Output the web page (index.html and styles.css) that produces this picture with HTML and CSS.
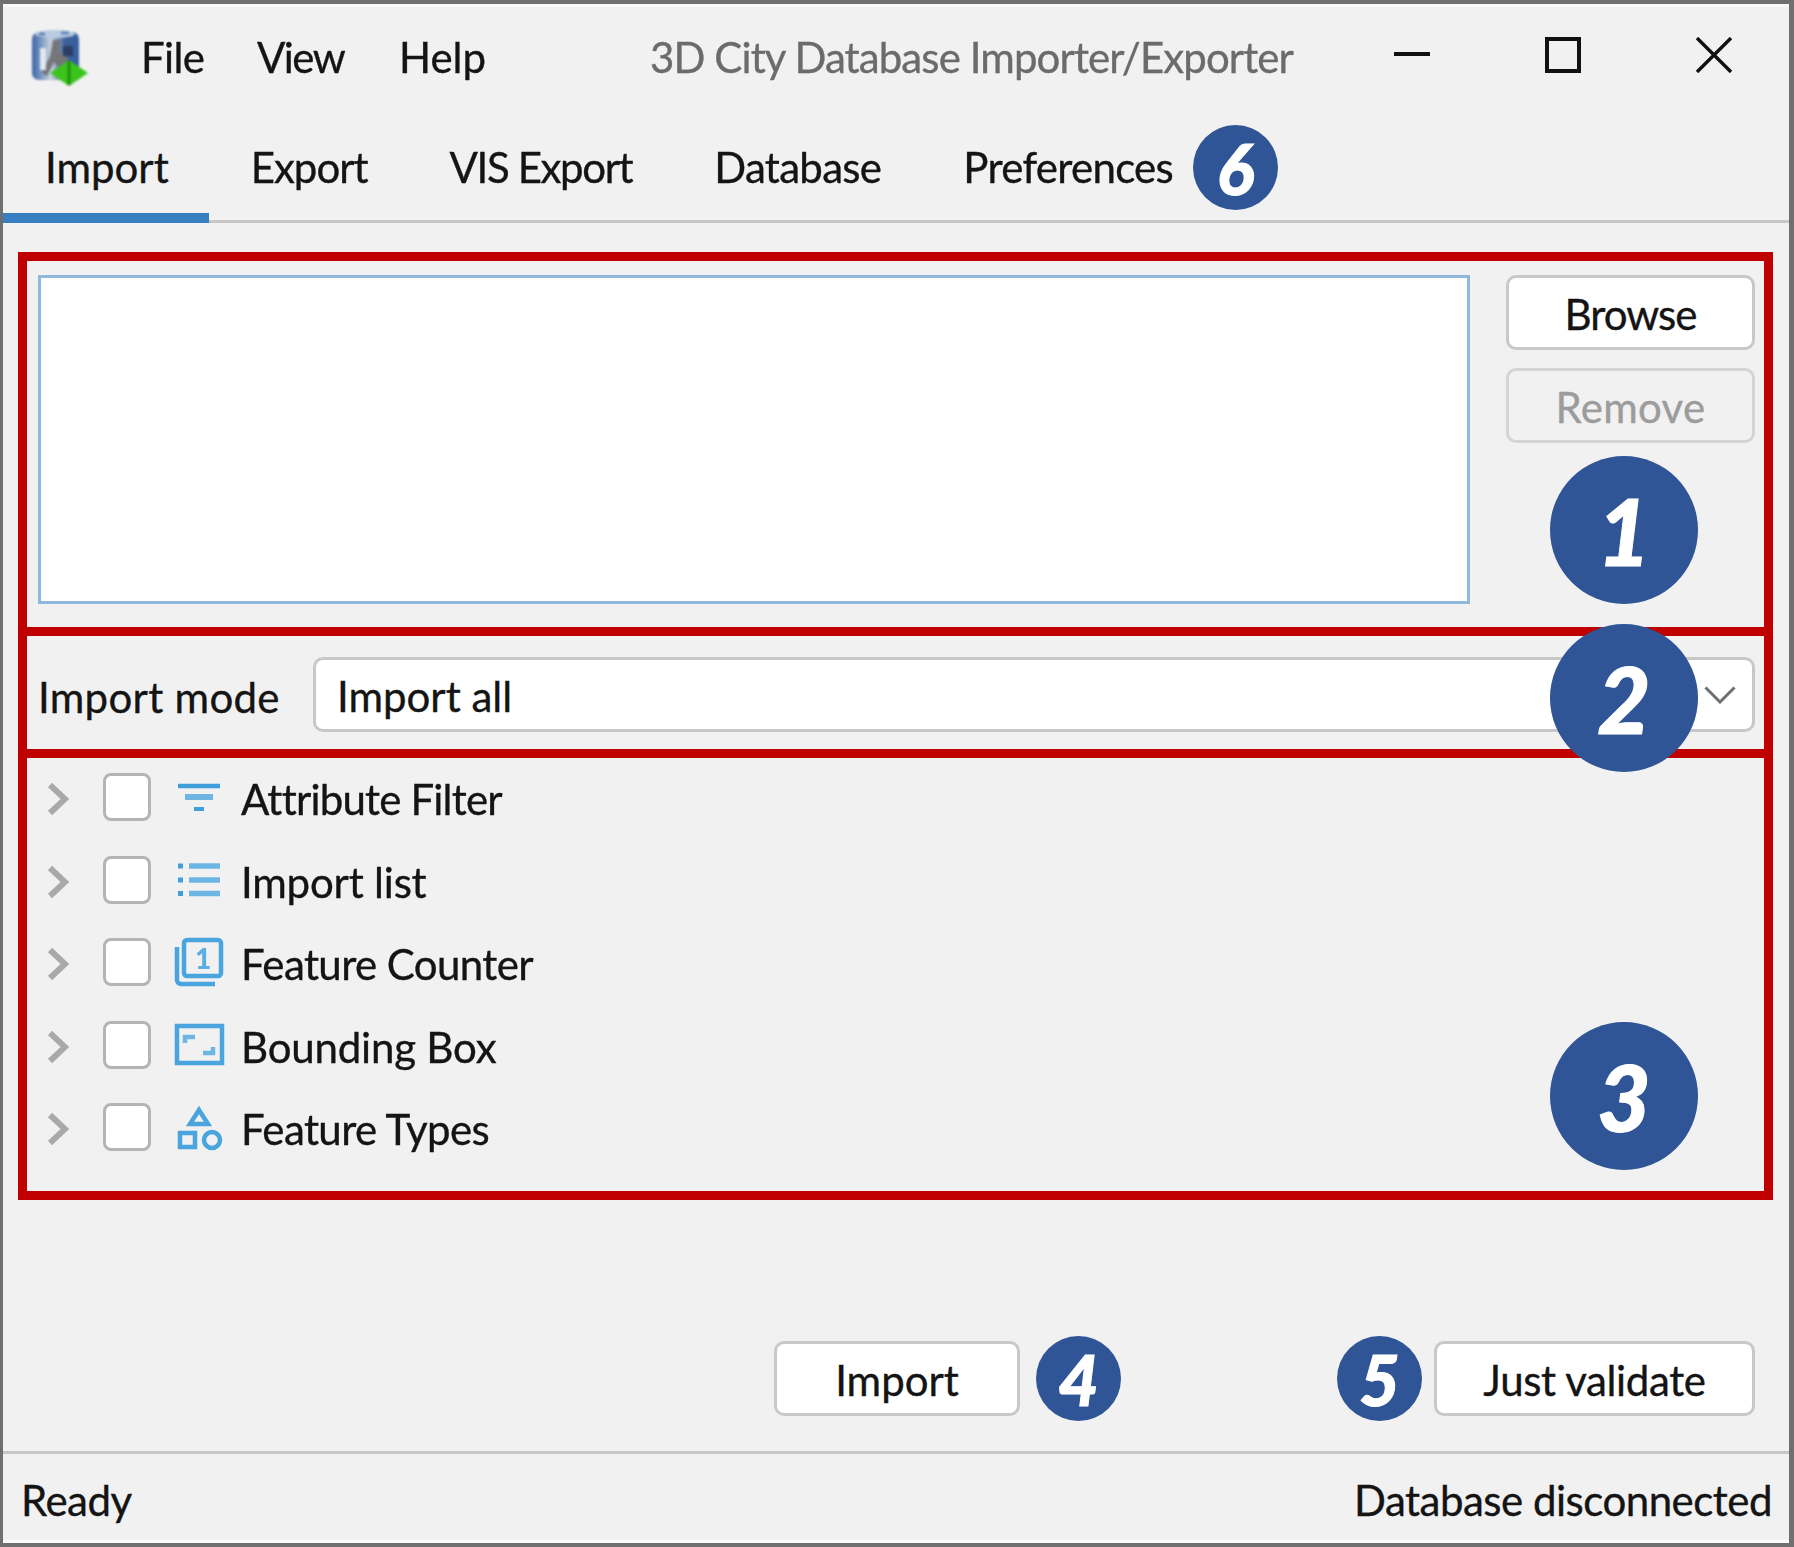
FILE: index.html
```html
<!DOCTYPE html>
<html lang="en">
<head>
<meta charset="utf-8">
<title>3D City Database Importer/Exporter</title>
<link rel="stylesheet" href="styles.css">
</head>
<body>
<div class="window">
  <header class="titlebar">
    <svg class="logo" viewBox="0 0 60 60" aria-hidden="true">
      <defs>
        <linearGradient id="cyl" x1="0" x2="1" y1="0" y2="0">
          <stop offset="0" stop-color="#3f66a6"/>
          <stop offset=".12" stop-color="#5f83b8"/>
          <stop offset=".4" stop-color="#c9d3de"/>
          <stop offset=".7" stop-color="#3d5f96"/>
          <stop offset="1" stop-color="#3560a4"/>
        </linearGradient>
      </defs>
      <rect x="3" y="4" width="47" height="48" rx="7" fill="url(#cyl)"/>
      <ellipse cx="26" cy="6" rx="20" ry="4" fill="#b9cbe0"/>
      <path d="M10 6h6M32 5h8" stroke="#5f83b8" stroke-width="3"/>
      <path d="M24 12h7v12l8 6-7 14-7-10-7 14-5-3 8-17z" fill="#75767a"/>
      <path d="M11 20h6v22h-6z" fill="#e2e8ee"/>
      <path d="M34 18h10v10h-10z" fill="#2c3e64"/>
      <polygon points="40,32 59,45 40,58 21,45" fill="#3cc41c"/>
      <path d="M40 33V57" stroke="#1e9010" stroke-width="3"/>
    </svg>
    <nav class="menu">
      <span class="menu-item menu-file">File</span>
      <span class="menu-item menu-view">View</span>
      <span class="menu-item menu-help">Help</span>
    </nav>
    <span class="app-title">3D City Database Importer/Exporter</span>
    <div class="controls">
      <span class="control"><svg class="control-icon" viewBox="0 0 36 36"><path d="M0 17H36" stroke="#111" stroke-width="4"/></svg></span>
      <span class="control"><svg class="control-icon" viewBox="0 0 36 36"><rect x="2" y="2" width="32" height="32" fill="none" stroke="#111" stroke-width="4"/></svg></span>
      <span class="control"><svg class="control-icon" viewBox="0 0 36 36"><path d="M1 1L35 35M35 1L1 35" stroke="#111" stroke-width="3.400"/></svg></span>
    </div>
  </header>

  <nav class="tabs">
    <span class="tab tab-active">Import</span>
    <span class="tab tab-export">Export</span>
    <span class="tab tab-vis">VIS Export</span>
    <span class="tab tab-db">Database</span>
    <span class="tab tab-prefs">Preferences</span>
  </nav>

  <main class="content">
    <section class="frame frame-files">
      <div class="file-list"></div>
      <div class="file-actions">
        <button class="btn btn-browse">Browse</button>
        <button class="btn btn-disabled">Remove</button>
      </div>
    </section>

    <section class="frame frame-mode">
      <label class="mode-label">Import mode</label>
      <div class="combo">
        <span class="combo-value">Import all</span>
        <svg class="combo-arrow" viewBox="0 0 32 18"><path d="M1.500 1.500L16 16L30.500 1.500" fill="none" stroke="#707070" stroke-width="3"/></svg>
      </div>
    </section>

    <section class="frame frame-tree">
      <div class="row">
        <svg class="chevron" viewBox="0 0 22 34"><path d="M3 3L18 17L3 31" fill="none" stroke="#a9a9a9" stroke-width="6"/></svg>
        <span class="check"></span>
        <svg class="icon" viewBox="0 0 48 48"><path d="M2 13H44" stroke="#3f9fdc" stroke-width="4.500"/><path d="M9 24H37" stroke="#6db6e4" stroke-width="6"/><path d="M18 36H28" stroke="#3f9fdc" stroke-width="4"/></svg>
        <span class="row-label label-attr">Attribute Filter</span>
      </div>
      <div class="row">
        <svg class="chevron" viewBox="0 0 22 34"><path d="M3 3L18 17L3 31" fill="none" stroke="#a9a9a9" stroke-width="6"/></svg>
        <span class="check"></span>
        <svg class="icon" viewBox="0 0 48 48"><path d="M2 10H7M2 24H7M2 37.500H7" stroke="#3f9fdc" stroke-width="5"/><path d="M13 10H44M13 24H44M13 37.500H44" stroke="#6db6e4" stroke-width="5.500"/></svg>
        <span class="row-label label-list">Import list</span>
      </div>
      <div class="row">
        <svg class="chevron" viewBox="0 0 22 34"><path d="M3 3L18 17L3 31" fill="none" stroke="#a9a9a9" stroke-width="6"/></svg>
        <span class="check"></span>
        <svg class="icon" viewBox="0 0 48 48"><rect x="8" y="2" width="37" height="36" rx="3" fill="none" stroke="#4aa5de" stroke-width="4.500"/><path d="M1 9V42a4 4 0 0 0 4 4H39" fill="none" stroke="#4aa5de" stroke-width="4.500"/><text class="icon-digit" x="27" y="31" text-anchor="middle">1</text></svg>
        <span class="row-label label-feat">Feature Counter</span>
      </div>
      <div class="row">
        <svg class="chevron" viewBox="0 0 22 34"><path d="M3 3L18 17L3 31" fill="none" stroke="#a9a9a9" stroke-width="6"/></svg>
        <span class="check"></span>
        <svg class="icon" viewBox="0 0 48 48"><rect x="1" y="5" width="45" height="37" fill="none" stroke="#4aa5de" stroke-width="4.500"/><path d="M9 22V16H19M27 32H37V26" fill="none" stroke="#6db6e4" stroke-width="4.500"/></svg>
        <span class="row-label label-list">Bounding Box</span>
      </div>
      <div class="row">
        <svg class="chevron" viewBox="0 0 22 34"><path d="M3 3L18 17L3 31" fill="none" stroke="#a9a9a9" stroke-width="6"/></svg>
        <span class="check"></span>
        <svg class="icon" viewBox="0 0 48 48"><path d="M23 7L32 21H14Z" fill="none" stroke="#4aa5de" stroke-width="4.500"/><rect x="4" y="30" width="15" height="14" fill="none" stroke="#4aa5de" stroke-width="4.500"/><circle cx="36" cy="37" r="8" fill="none" stroke="#4aa5de" stroke-width="4.500"/></svg>
        <span class="row-label label-feat">Feature Types</span>
      </div>
    </section>

    <div class="actions">
      <button class="btn btn-import">Import</button>
      <button class="btn btn-validate">Just validate</button>
    </div>
  </main>

  <footer class="statusbar">
    <span class="status-text">Ready</span>
    <span class="status-text">Database disconnected</span>
  </footer>

  <span class="badge badge-large badge-1">1</span>
  <span class="badge badge-large badge-2">2</span>
  <span class="badge badge-large badge-3">3</span>
  <span class="badge badge-small badge-4">4</span>
  <span class="badge badge-small badge-5">5</span>
  <span class="badge badge-small badge-6">6</span>
</div>
</body>
</html>
```
FILE: styles.css
```css
* { box-sizing: border-box; }

html, body { margin: 0; padding: 0; }

body {
  width: 1794px;
  height: 1547px;
  background: #f1f1f1;
  font-family: "Lato", "Liberation Sans", sans-serif;
  font-size: 42px;
  color: #141414;
  -webkit-text-stroke: .35px currentColor;
}

.window {
  position: relative;
  width: 1794px;
  height: 1547px;
  display: flex;
  flex-direction: column;
  background: #f1f1f1;
  border-style: solid;
  border-color: #6f6f6f;
  border-width: 4px 5px 4px 3px;
  box-shadow: inset 0 3px 0 #f8f8f8, inset 0 -3px 0 #fbfbfb;
}

/* Title bar */
.titlebar {
  height: 101px;
  display: flex;
  align-items: center;
  flex: none;
}

.logo {
  width: 60px;
  height: 60px;
  margin: 6px 0 0 26px;
  flex: none;
  filter: blur(1px);
}

.menu {
  display: flex;
  margin-left: 52px;
  padding-top: 5px;
  filter: blur(.5px);
}

.menu-file { width: 116px; letter-spacing: -.6px; }
.menu-view { width: 142px; letter-spacing: -1.600px; }
.menu-help { width: 251px; }

.app-title {
  color: #6b6b6b;
  white-space: nowrap;
  padding-top: 5px;
  letter-spacing: -.9px;
  filter: blur(.5px);
}

.controls {
  display: flex;
  margin-left: auto;
}

.control {
  width: 151px;
  display: flex;
  justify-content: center;
}

.control-icon { width: 36px; height: 36px; }

/* Tabs */
.tabs {
  height: 118px;
  flex: none;
  display: flex;
  border-bottom: 3px solid #c6c6c6;
}

.tab {
  padding: 37px 40px 0 42px;
  height: 118px;
  filter: blur(.5px);
}

.tab-export { letter-spacing: -1px; }
.tab-vis { letter-spacing: -1.400px; }
.tab-db { letter-spacing: -.7px; }
.tab-prefs { letter-spacing: -.7px; }

.tab-active {
  filter: none;
  border-bottom: 10px solid #3a7ec2;
}

/* Main content */
.content {
  flex: 1;
  display: flex;
  flex-direction: column;
  padding: 29px 16px 0 15px;
}

.frame {
  border: 9px solid #c00000;
}

.frame-files {
  height: 384px;
  display: flex;
  gap: 36px;
  padding: 14px 9px 23px 11px;
}

.file-list {
  flex: 1;
  background: #fff;
  border: 3px solid #8fb8dc;
}

.file-actions {
  width: 249px;
  display: flex;
  flex-direction: column;
  gap: 18px;
}

.btn {
  font: inherit;
  color: #141414;
  height: 75px;
  background: #fff;
  border: 3px solid #c8c8c8;
  border-radius: 10px;
  padding: 3px 0 0;
  -webkit-text-stroke: .35px currentColor;
}

.btn-browse { letter-spacing: -1px; }

.btn-disabled {
  background: #f1f1f1;
  color: #9c9c9c;
  border-color: #d4d4d4;
  letter-spacing: .3px;
}

.frame-mode {
  height: 122px;
  border-top: 0;
  display: flex;
  align-items: flex-start;
  padding: 21px 9px 0 11px;
}

.mode-label {
  width: 275px;
  line-height: 75px;
  padding-top: 3px;
  letter-spacing: .3px;
}

.combo {
  flex: 1;
  height: 75px;
  background: #fff;
  border: 3px solid #c8c8c8;
  border-radius: 10px;
  padding: 0 16px 0 21px;
  display: flex;
  align-items: center;
  justify-content: space-between;
}

.combo-value { padding-top: 3px; }

.combo-arrow { width: 32px; height: 18px; }

.frame-tree {
  height: 442px;
  border-top: 0;
  display: flex;
  flex-direction: column;
  gap: 10.600px;
  padding: 3px 0 0 20px;
}

.row {
  height: 72px;
  display: flex;
  align-items: center;
}

.chevron {
  width: 22px;
  height: 34px;
  margin-right: 34px;
  margin-top: 4px;
  flex: none;
  filter: blur(.5px);
}

.check {
  width: 48px;
  height: 48px;
  background: #fff;
  border: 3px solid #b4b4b4;
  border-radius: 8px;
  margin-right: 25px;
  flex: none;
}

.icon {
  width: 48px;
  height: 48px;
  margin-right: 17px;
  flex: none;
  filter: blur(.7px);
  overflow: visible;
  -webkit-text-stroke: 0;
}

.icon-digit {
  font-family: "Lato", sans-serif;
  font-size: 28px;
  font-weight: 900;
  fill: #5aaee2;
}

.row-label {
  padding-top: 4px;
  filter: blur(.4px);
}

.label-attr { letter-spacing: -.8px; }
.label-list { letter-spacing: -.2px; }
.label-feat { letter-spacing: -.6px; }

.actions {
  flex: 1;
  display: flex;
  justify-content: flex-end;
  align-items: flex-end;
  gap: 414px;
  padding: 0 18px 35px 0;
}

.btn-import { width: 246px; }
.btn-validate { width: 321px; letter-spacing: -.35px; }

/* Status bar */
.statusbar {
  height: 92px;
  flex: none;
  border-top: 3px solid #c6c6c6;
  display: flex;
  align-items: center;
  justify-content: space-between;
  padding: 0 17px 0 18px;
}

.status-text {
  padding-top: 3px;
  letter-spacing: -.5px;
}

/* Numbered annotation badges that sit over the UI */
.badge {
  position: absolute;
  border-radius: 50%;
  background: #2f5597;
  color: #fff;
  font-family: "Lato", sans-serif;
  font-style: italic;
  font-weight: 900;
  display: flex;
  align-items: center;
  justify-content: center;
  -webkit-text-stroke: 1px #fff;
}

.badge-large { width: 148px; height: 148px; font-size: 92px; }
.badge-small { width: 85px; height: 85px; font-size: 70px; }

.badge-1 { left: 1547px; top: 452px; }
.badge-2 { left: 1547px; top: 620px; }
.badge-3 { left: 1547px; top: 1018px; }
.badge-4 { left: 1033px; top: 1332px; }
.badge-5 { left: 1334px; top: 1332px; }
.badge-6 { left: 1190px; top: 121px; }
```
